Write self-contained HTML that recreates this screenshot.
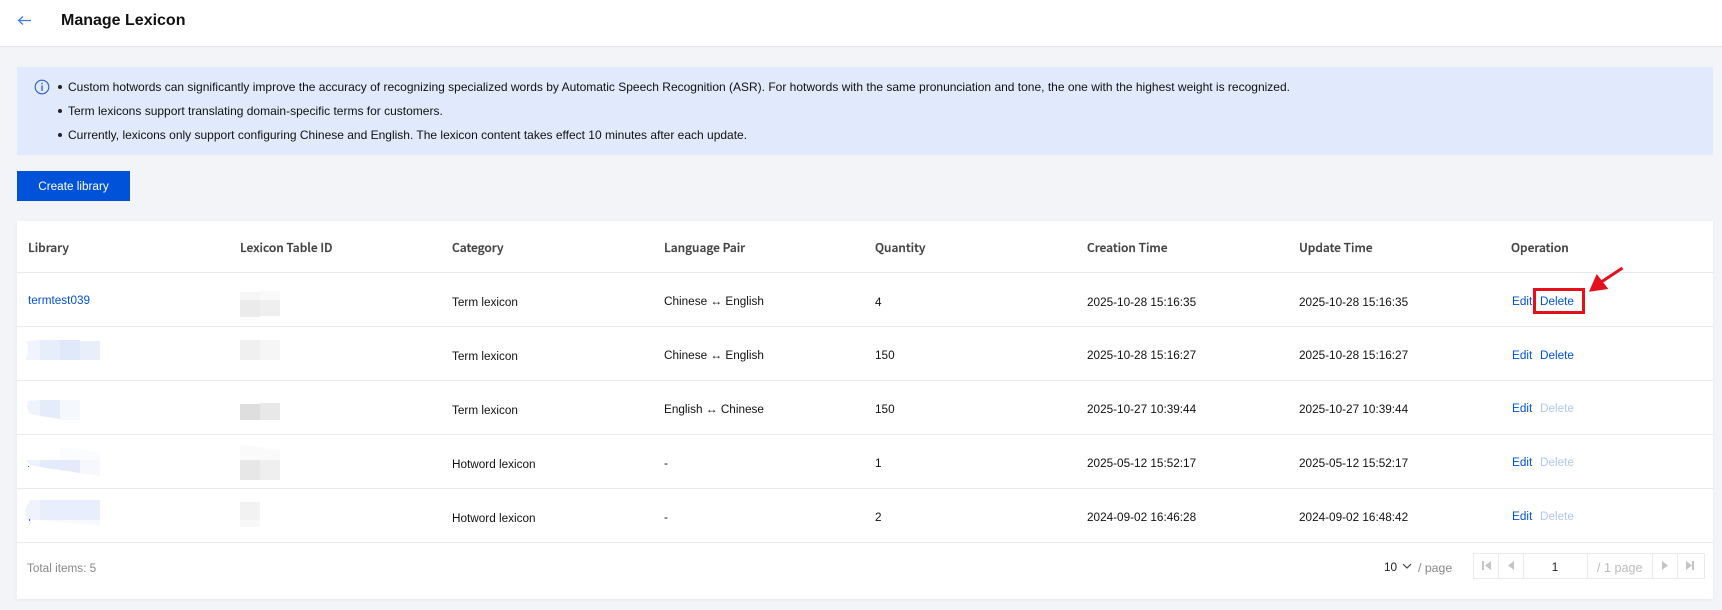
<!DOCTYPE html>
<html><head><meta charset="utf-8"><style>
html,body{margin:0;padding:0;background:#f2f4f8;}
body{width:1722px;height:610px;position:relative;overflow:hidden;font-family:"Liberation Sans","Noto Sans CJK SC",sans-serif;font-size:11.75px;color:#111;}
.a{position:absolute;}
.t{position:absolute;white-space:nowrap;line-height:20px;height:20px;}
.t:not(.h){transform:translateY(1px);}
.h{font-family:"Noto Sans CJK SC","Liberation Sans",sans-serif;font-size:12px;font-weight:500;color:#444;-webkit-text-stroke:.25px #444;}
.l{color:#0052d9;}
.d{color:#b0c8f0;}
.ln{position:absolute;left:17px;width:1696px;height:1px;background:#e7eaef;}
.al{position:absolute;left:68px;white-space:nowrap;font-family:"Liberation Sans",sans-serif;font-size:12px;line-height:24px;color:#111;}
.dot{position:absolute;left:58px;width:4px;height:4px;border-radius:50%;background:#222;}
.pg{position:absolute;top:553px;height:24px;border:1px solid #e7eaef;border-right:none;background:#fff;}
</style></head><body>
<div class="a" style="left:0;top:0;width:1722px;height:46px;background:#fff;border-bottom:1px solid #e3e6eb;"></div>
<svg class="a" style="left:17px;top:14px" width="16" height="14" viewBox="0 0 16 14"><path d="M1.5 6.5H14M6 2.5L1.5 6.5L6 10.5" fill="none" stroke="#3a78e6" stroke-width="1.2"/></svg>
<div class="a" style="left:61px;top:9px;font:bold 16px/24px 'Liberation Sans',sans-serif;color:#111;">Manage Lexicon</div>

<div class="a" style="left:17px;top:67px;width:1696px;height:88px;background:#e1eafc;"></div>
<svg class="a" style="left:34px;top:79px" width="16" height="16" viewBox="0 0 16 16"><circle cx="8" cy="8" r="6.8" fill="none" stroke="#2a5fd0" stroke-width="1.1"/><rect x="7.4" y="3.8" width="1.3" height="1.4" fill="#2a5fd0"/><rect x="7.4" y="6.4" width="1.3" height="5.6" fill="#2a5fd0"/></svg>
<div class="dot" style="top:85px"></div>
<div class="dot" style="top:109px"></div>
<div class="dot" style="top:133px"></div>
<div class="al" style="top:75px">Custom hotwords can significantly improve the accuracy of recognizing specialized words by Automatic Speech Recognition (ASR). For hotwords with the same pronunciation and tone, the one with the highest weight is recognized.</div>
<div class="al" style="top:99px">Term lexicons support translating domain-specific terms for customers.</div>
<div class="al" style="top:123px">Currently, lexicons only support configuring Chinese and English. The lexicon content takes effect 10 minutes after each update.</div>

<div class="a" style="left:17px;top:171px;width:113px;height:30px;background:#0052d9;color:#fff;text-align:center;line-height:32px;">Create library</div>

<div class="a" style="left:17px;top:221px;width:1696px;height:378px;background:#fff;box-shadow:0 1px 3px rgba(0,0,0,.06);"></div>
<div class="ln" style="top:272px"></div><div class="ln" style="top:326px"></div><div class="ln" style="top:380px"></div><div class="ln" style="top:434px"></div><div class="ln" style="top:488px"></div><div class="ln" style="top:542px"></div>

<div class="t h" style="left:28px;top:238px">Library</div>
<div class="t h" style="left:240px;top:238px">Lexicon Table ID</div>
<div class="t h" style="left:452px;top:238px">Category</div>
<div class="t h" style="left:664px;top:238px">Language Pair</div>
<div class="t h" style="left:875px;top:238px">Quantity</div>
<div class="t h" style="left:1087px;top:238px">Creation Time</div>
<div class="t h" style="left:1299px;top:238px">Update Time</div>
<div class="t h" style="left:1511px;top:238px">Operation</div>

<div class="t l" style="left:28px;top:290px">termtest039</div>
<div class="t" style="left:452px;top:292px">Term lexicon</div><div class="t" style="left:664px;top:291px">Chinese ↔ English</div><div class="t" style="left:875px;top:292px">4</div><div class="t" style="left:1087px;top:292px">2025-10-28 15:16:35</div><div class="t" style="left:1299px;top:292px">2025-10-28 15:16:35</div><div class="t l" style="left:1512px;top:291px">Edit</div><div class="t l" style="left:1540px;top:291px">Delete</div>

<div class="t" style="left:452px;top:346px">Term lexicon</div><div class="t" style="left:664px;top:345px">Chinese ↔ English</div><div class="t" style="left:875px;top:345px">150</div><div class="t" style="left:1087px;top:345px">2025-10-28 15:16:27</div><div class="t" style="left:1299px;top:345px">2025-10-28 15:16:27</div><div class="t l" style="left:1512px;top:345px">Edit</div><div class="t l" style="left:1540px;top:345px">Delete</div>

<div class="t" style="left:452px;top:400px">Term lexicon</div><div class="t" style="left:664px;top:399px">English ↔ Chinese</div><div class="t" style="left:875px;top:399px">150</div><div class="t" style="left:1087px;top:399px">2025-10-27 10:39:44</div><div class="t" style="left:1299px;top:399px">2025-10-27 10:39:44</div><div class="t l" style="left:1512px;top:398px">Edit</div><div class="t d" style="left:1540px;top:398px">Delete</div>

<div class="t" style="left:452px;top:454px">Hotword lexicon</div><div class="t" style="left:664px;top:453px">-</div><div class="t" style="left:875px;top:453px">1</div><div class="t" style="left:1087px;top:453px">2025-05-12 15:52:17</div><div class="t" style="left:1299px;top:453px">2025-05-12 15:52:17</div><div class="t l" style="left:1512px;top:452px">Edit</div><div class="t d" style="left:1540px;top:452px">Delete</div>

<div class="t" style="left:452px;top:508px">Hotword lexicon</div><div class="t" style="left:664px;top:507px">-</div><div class="t" style="left:875px;top:507px">2</div><div class="t" style="left:1087px;top:507px">2024-09-02 16:46:28</div><div class="t" style="left:1299px;top:507px">2024-09-02 16:48:42</div><div class="t l" style="left:1512px;top:506px">Edit</div><div class="t d" style="left:1540px;top:506px">Delete</div>

<!-- blurred blocks -->
<svg class="a" style="left:0;top:0" width="1722" height="610" shape-rendering="crispEdges">
<rect x="240" y="292" width="20" height="9" fill="#f6f6f6"/><rect x="260" y="291" width="20" height="9" fill="#f9f9f9"/><rect x="240" y="300" width="20" height="17" fill="#ebebeb"/><rect x="260" y="300" width="20" height="16" fill="#efefef"/>
<rect x="240" y="340" width="20" height="20" fill="#f0f0f0"/><rect x="260" y="340" width="20" height="20" fill="#f6f6f6"/>
<polygon points="27,341 40,340 40,360 25,360 28,352" fill="#f1f4fc"/><rect x="40" y="340" width="20" height="20" fill="#e7eefb"/><rect x="60" y="340" width="20" height="20" fill="#dfe9f9"/><rect x="80" y="341" width="20" height="19" fill="#e8eefa"/>
<polygon points="28,401 40,400 40,416 30,414 27,408" fill="#eef3fc"/><polygon points="40,400 60,400 60,419 40,416" fill="#e4ecf9"/><rect x="60" y="400" width="20" height="20" fill="#f5f9fe"/>
<polygon points="240,404 260,404 260,420 240,420" fill="#dedede"/><rect x="260" y="403" width="20" height="17" fill="#e8e8e8"/>
<polygon points="26,460 40,460 40,467 30,465" fill="#eef2fc"/><polygon points="40,460 80,460 80,473 60,470 40,467" fill="#e3ebfa"/><polygon points="80,460 100,460 100,476 80,473" fill="#f6f8fd"/><polygon points="60,447 100,451 100,460 60,460" fill="#fbfcfe"/>
<polygon points="240,445 280,450 280,460 240,460" fill="#fafafa"/><rect x="240" y="460" width="20" height="20" fill="#e7e7e7"/><rect x="260" y="460" width="20" height="20" fill="#efefef"/>
<polygon points="30,500 40,500 40,520 27,520 25,510" fill="#f0f3fc"/><rect x="40" y="500" width="60" height="20" fill="#e8eefb"/><polygon points="40,520 100,520 100,525 70,523" fill="#f8f9fe"/>
<rect x="240" y="502" width="20" height="18" fill="#f2f2f2"/><rect x="240" y="520" width="20" height="7" fill="#f8f8f8"/>
<rect x="28" y="466" width="1" height="1" fill="#2a5fd0"/><rect x="29" y="519" width="1" height="2" fill="#2a5fd0"/>
</svg>

<!-- annotation -->
<div class="a" style="left:1533px;top:288px;width:46px;height:20px;border:3px solid #e60f1c;"></div>
<svg class="a" style="left:1580px;top:260px" width="50" height="40" viewBox="0 0 50 40"><path d="M9 31.7L16.7 14L28.3 29Z" fill="#e60f1c"/><path d="M42.5 8L22 21.5" stroke="#e60f1c" stroke-width="3" fill="none"/></svg>

<!-- footer -->
<div class="t" style="left:27px;top:558px;color:#888;">Total items: 5</div>
<div class="t" style="left:1384px;top:557px;color:#222;">10</div>
<svg class="a" style="left:1402px;top:563px" width="10" height="7" viewBox="0 0 10 7"><path d="M1 1L5 5L9 1" fill="none" stroke="#444" stroke-width="1.2"/></svg>
<div class="t" style="left:1418px;top:557px;color:#888;font-size:12.3px;">/ page</div>

<div class="pg" style="left:1473px;width:25px;"></div>
<div class="pg" style="left:1498px;width:25px;"></div>
<div class="pg" style="left:1523px;width:64px;"></div>
<div class="pg" style="left:1587px;width:65px;"></div>
<div class="pg" style="left:1652px;width:25px;"></div>
<div class="pg" style="left:1677px;width:26px;border-right:1px solid #e7eaef;"></div>
<div class="t" style="left:1523px;width:64px;top:557px;text-align:center;color:#222;">1</div>
<div class="t" style="left:1597px;top:557px;color:#bbb;font-size:12.6px;">/ 1 page</div>
<svg class="a" style="left:0;top:0" width="1722" height="610"><g fill="#c4c4c4">
<rect x="1482" y="561" width="2" height="9"/><path d="M1491 561V570L1485 565.5Z"/>
<path d="M1514 561V570L1508 565.5Z"/>
<path d="M1662 561V570L1668 565.5Z"/>
<path d="M1686 561V570L1692 565.5Z"/><rect x="1692" y="561" width="2" height="9"/>
</g></svg>
</body></html>
